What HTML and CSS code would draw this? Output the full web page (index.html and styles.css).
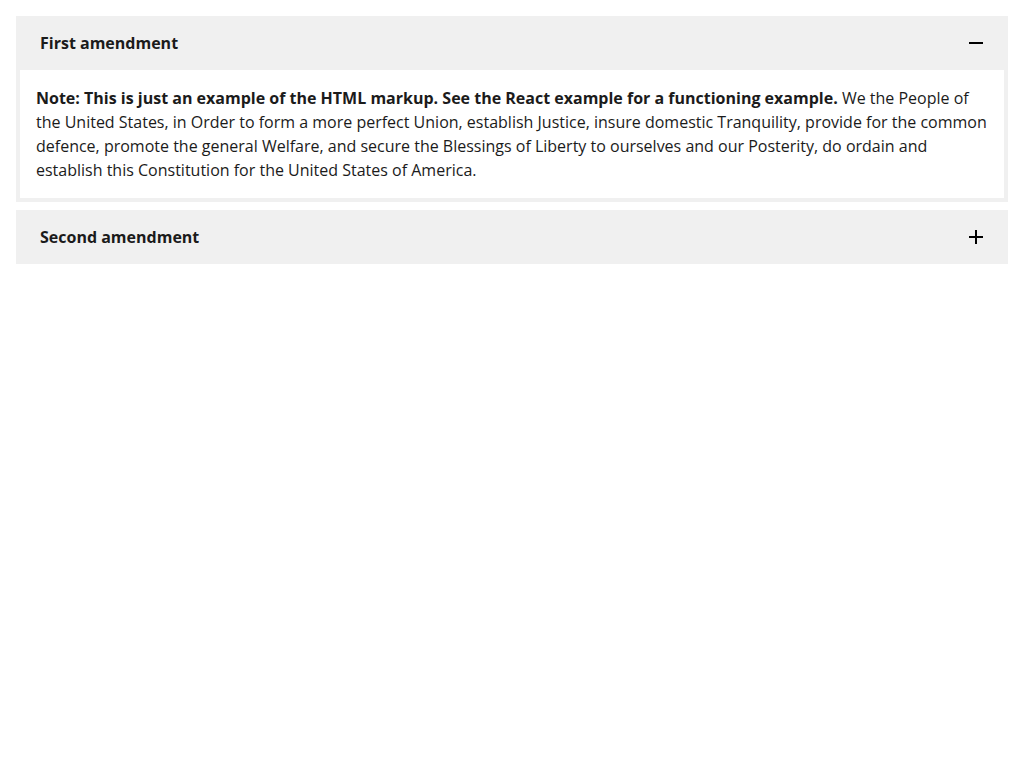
FILE: index.html
```html
<!DOCTYPE html>
<html lang="en">
<head>
<meta charset="utf-8">
<title>Accordion</title>
<link rel="stylesheet" href="styles.css">
</head>
<body>
<div class="accordion">
  <h4 class="accordion-heading">
    <button class="accordion-button" aria-expanded="true">
      <span>First amendment</span>
      <svg class="icon" width="14" height="14" viewBox="0 0 14 14" aria-hidden="true"><path d="M0 7H14" stroke="#000" stroke-width="2"/></svg>
    </button>
  </h4>
  <div class="accordion-content">
    <p><strong>Note: This is just an example of the HTML markup. See the React example for a functioning example.</strong> We the People of the United States, in Order to form a more perfect Union, establish Justice, insure domestic Tranquility, provide for the common defence, promote the general Welfare, and secure the Blessings of Liberty to ourselves and our Posterity, do ordain and establish this Constitution for the United States of America.</p>
  </div>
  <h4 class="accordion-heading second">
    <button class="accordion-button" aria-expanded="false">
      <span>Second amendment</span>
      <svg class="icon" width="14" height="14" viewBox="0 0 14 14" aria-hidden="true"><path d="M0 7H14M7 0V14" stroke="#000" stroke-width="2"/></svg>
    </button>
  </h4>
</div>
</body>
</html>
```
FILE: styles.css
```css
html, body {
  margin: 0;
  padding: 0;
  background: #fff;
}
body {
  padding: 16px;
  font-family: "Open Sans", "Liberation Sans", sans-serif;
  color: #1b1b1b;
}
.accordion {
  display: flex;
  flex-direction: column;
}
.accordion-heading {
  margin: 0;
  font-size: 16px;
}
.accordion-heading.second {
  margin-top: 8px;
}
.accordion-button {
  display: flex;
  align-items: center;
  justify-content: space-between;
  width: 100%;
  box-sizing: border-box;
  height: 54px;
  padding: 0 25px 0 24px;
  border: 0;
  margin: 0;
  background: #f0f0f0;
  font-family: inherit;
  font-size: 16px;
  font-weight: 700;
  line-height: 22px;
  color: #1b1b1b;
  text-align: left;
  cursor: pointer;
}
.icon {
  flex: none;
  display: block;
}
.accordion-content {
  border: 4px solid #f0f0f0;
  border-top: 0;
  padding: 16px 12px 16px 16px;
  background: #fff;
}
.accordion-content p {
  margin: 0;
  font-size: 16px;
  line-height: 24px;
  color: #1b1b1b;
}
.accordion-content strong {
  font-weight: 700;
}
```
